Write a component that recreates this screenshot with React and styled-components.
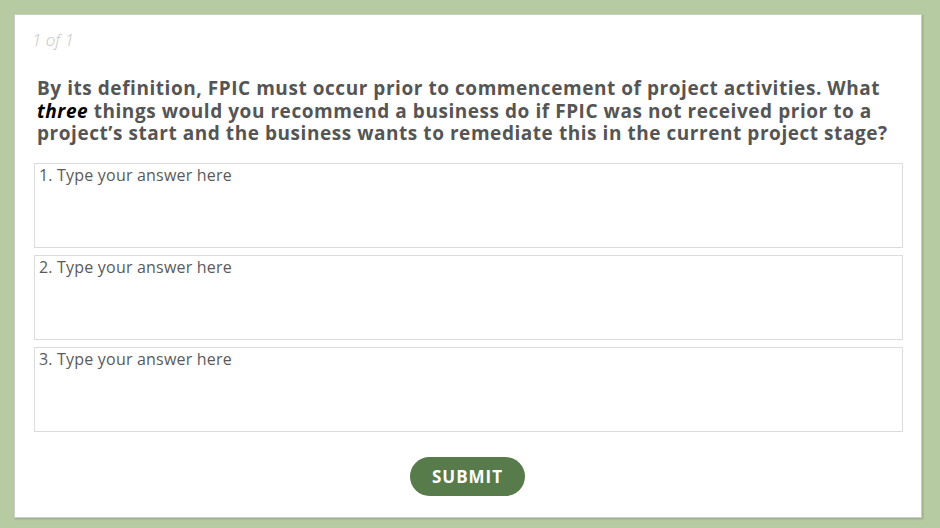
import styled, { createGlobalStyle } from "styled-components";

const GlobalStyle = createGlobalStyle`
    html, body {
        margin: 0;
        padding: 0;
        background: #b6cba2;
    }
    * {
        box-sizing: border-box;
    }
`;

export default function App() {
    const answers = [1, 2, 3];

    return (
        <Page>
            <GlobalStyle />
            <Card>
                <Counter>1 of 1</Counter>
                <Question>
                    By its definition, FPIC must occur prior to commencement of project activities. What<br />
                    <Emphasis>three</Emphasis> things would you recommend a business do if FPIC was not received prior to a<br />
                    project’s start and the business wants to remediate this in the current project stage?
                </Question>
                <Answers>
                    {answers.map((n) => (
                        <Answer key={n} placeholder={`${n}. Type your answer here`} />
                    ))}
                </Answers>
                <Footer>
                    <SubmitButton>SUBMIT</SubmitButton>
                </Footer>
            </Card>
        </Page>
    );
}

const Page = styled.div`
    width: 940px;
    height: 528px;
    padding: 14px 18px 10px 14px;
    background: #b6cba2;
`;

const Card = styled.div`
    width: 908px;
    height: 504px;
    background: #ffffff;
    border: 1px solid #c9cfc4;
    box-shadow: 1px 1px 2px rgba(80, 100, 70, 0.35);
    padding: 14px 18px 0 19px;
    display: flex;
    flex-direction: column;
`;

const Counter = styled.div`
    font-family: "Open Sans", sans-serif;
    font-style: italic;
    font-weight: 300;
    font-size: 17px;
    color: #c6c6c6;
    line-height: 22px;
    margin-left: -2px;
`;

const Question = styled.p`
    margin: 26px 0 0 3px;
    font-family: "Open Sans", sans-serif;
    font-weight: 700;
    font-size: 19px;
    letter-spacing: 0.55px;
    line-height: 22.6px;
    color: #555555;
    white-space: nowrap;
`;

const Emphasis = styled.em`
    color: #000000;
    font-style: italic;
`;

const Answers = styled.div`
    display: flex;
    flex-direction: column;
    gap: 7px;
    margin-top: 18px;
`;

const Answer = styled.textarea`
    display: block;
    width: 869px;
    height: 85px;
    resize: none;
    border: 1px solid #dcdcdc;
    border-radius: 0;
    padding: 1px 4px;
    font-family: "Open Sans", sans-serif;
    font-size: 16px;
    letter-spacing: 0.2px;
    line-height: 20px;
    color: #555555;
    outline: none;

    &::placeholder {
        color: #5a5a5a;
    }
`;

const Footer = styled.div`
    display: flex;
    justify-content: center;
    margin-top: 25px;
    padding-right: 2px;
`;

const SubmitButton = styled.button`
    width: 115px;
    height: 39px;
    border: none;
    border-radius: 20px;
    background: #587b4b;
    color: #ffffff;
    font-family: "Open Sans", sans-serif;
    font-weight: 700;
    font-size: 17px;
    letter-spacing: 1px;
    cursor: pointer;
`;
